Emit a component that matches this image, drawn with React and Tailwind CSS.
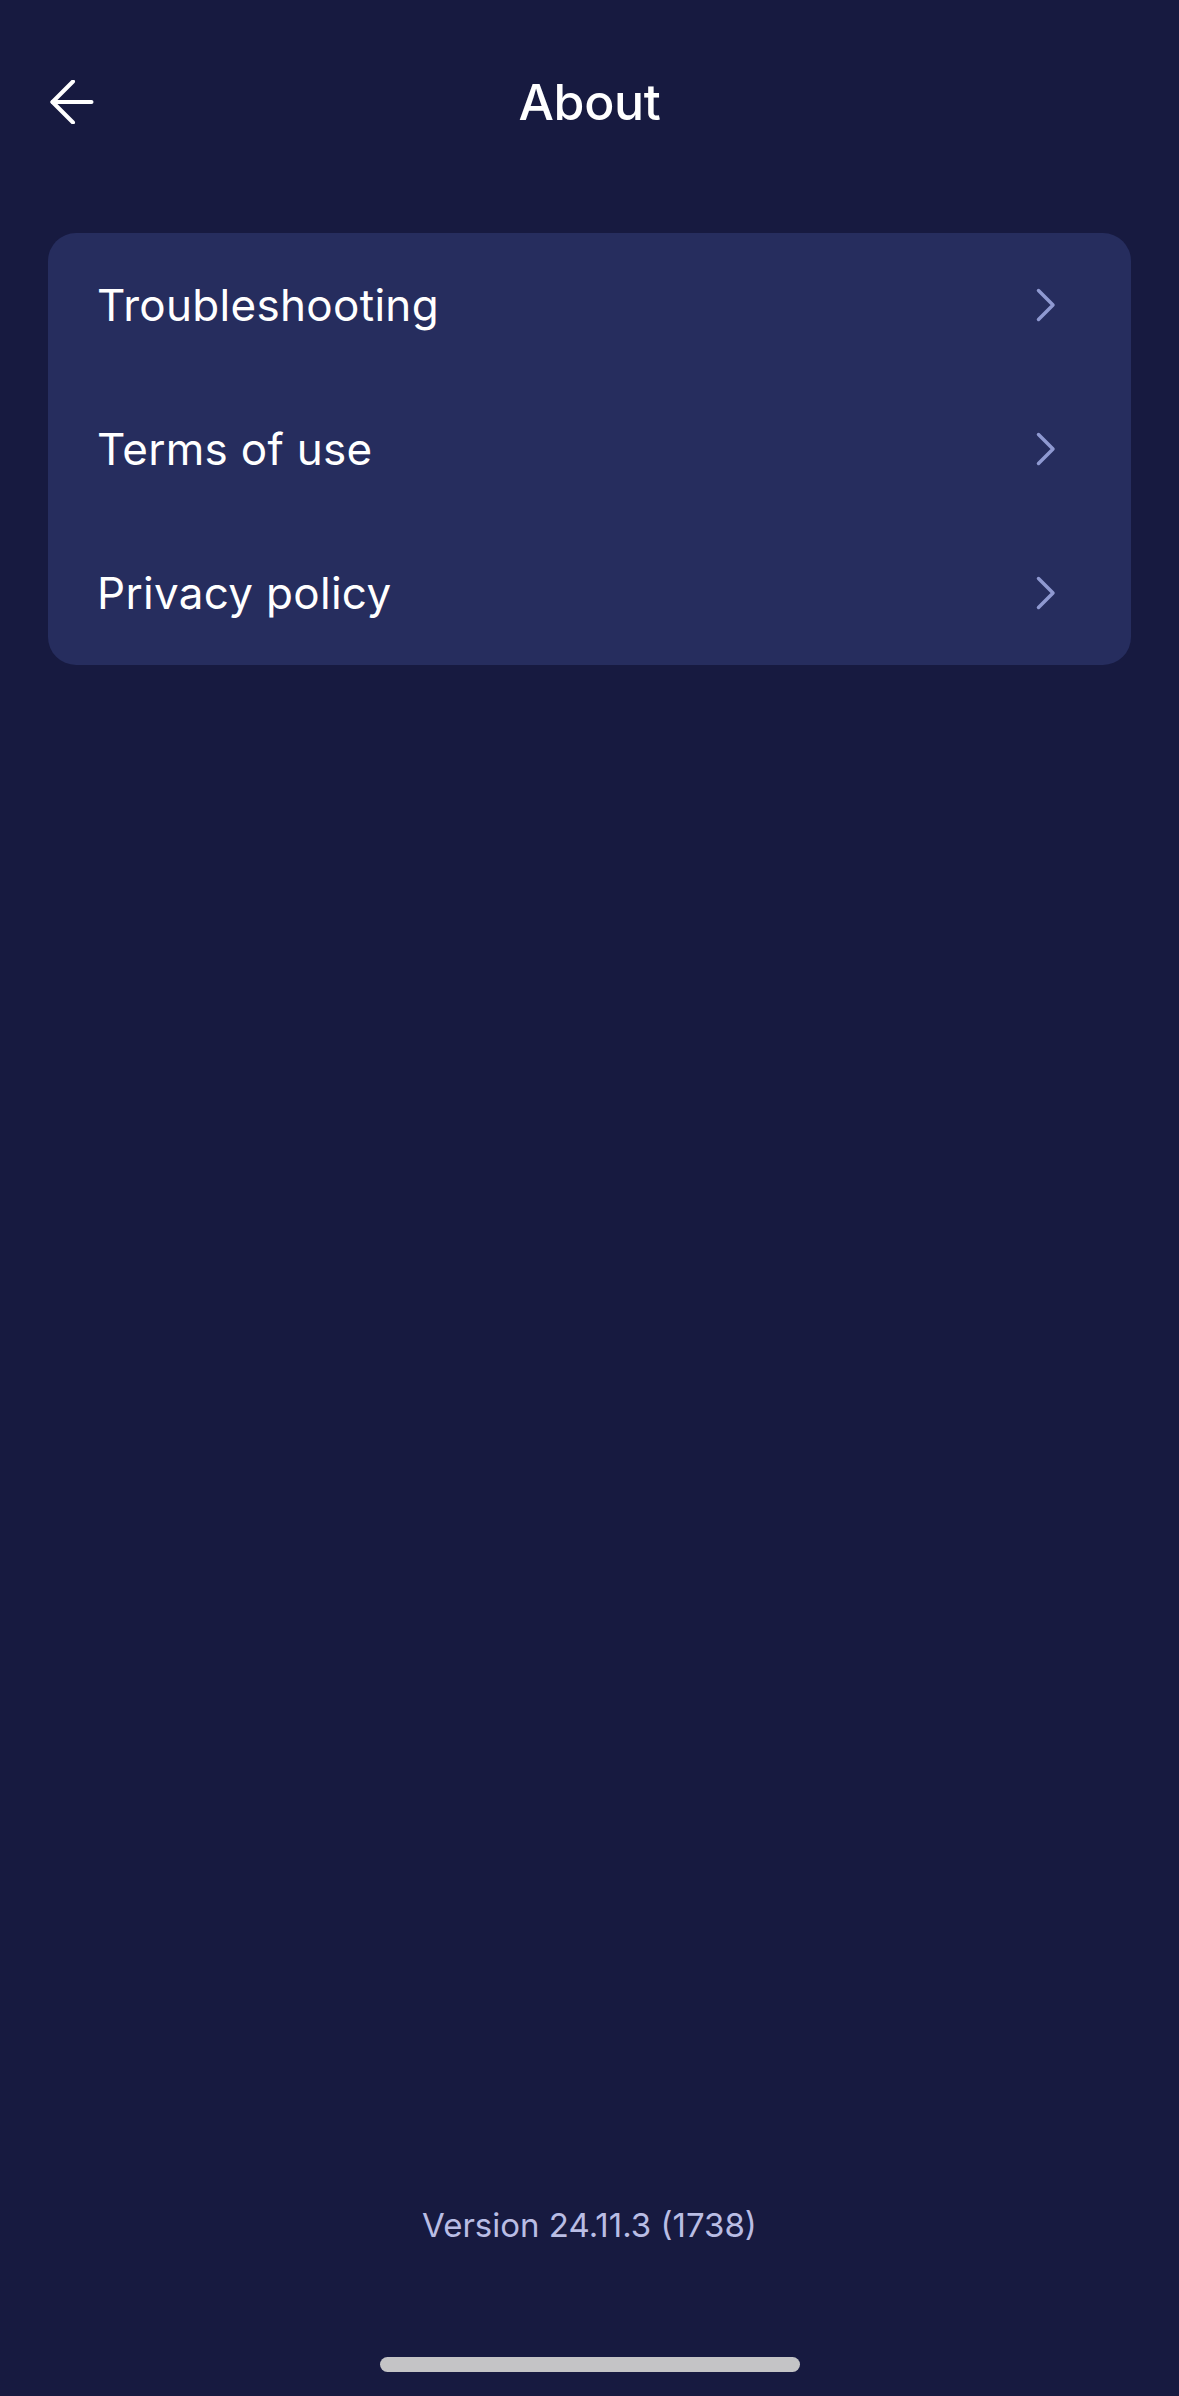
import React from 'react';

const items = ['Troubleshooting', 'Terms of use', 'Privacy policy'];

const BackArrow = () => (
  <svg width="44" height="44" viewBox="0 0 44 44" fill="none" stroke="white" strokeWidth="4" strokeLinecap="round" strokeLinejoin="round">
    <path d="M23 1.5 L2.5 22 L23 42.5" />
    <path d="M2.5 22 H41.5" />
  </svg>
);

const Chevron = () => (
  <svg width="20" height="34" viewBox="0 0 20 34" fill="none" stroke="#8f99d1" strokeWidth="3.5" strokeLinecap="round" strokeLinejoin="round">
    <path d="M2.5 2.5 L17 17 L2.5 31.5" />
  </svg>
);

export default function App() {
  return (
    <div
      className="h-screen w-full flex flex-col bg-[#171a40] text-white"
      style={{ fontFamily: 'Inter, "Noto Sans", sans-serif' }}
    >
      {/* Header */}
      <div className="relative h-[204px] flex items-center justify-center">
        <button className="absolute left-[50px] top-[80px]">
          <BackArrow />
        </button>
        <h1 className="text-[50px] font-medium tracking-[-0.3px]">About</h1>
      </div>

      {/* Menu card */}
      <div className="mx-[48px] mt-[29px] rounded-[28px] bg-[#262d5e] overflow-hidden">
        {items.map((label) => (
          <div key={label} className="h-[144px] flex items-center justify-between pl-[49px] pr-[75px]">
            <span className="text-[44px] font-normal tracking-[0.3px] text-white">{label}</span>
            <Chevron />
          </div>
        ))}
      </div>

      <div className="flex-1" />

      {/* Footer */}
      <div className="flex flex-col items-center">
        <p className="text-[33px] leading-[48px] text-[#b9bde4]">Version 24.11.3 (1738)</p>
        <div className="mt-[108px] mb-[24px] h-[15px] w-[420px] rounded-full bg-[#c4c4c6]" />
      </div>
    </div>
  );
}
